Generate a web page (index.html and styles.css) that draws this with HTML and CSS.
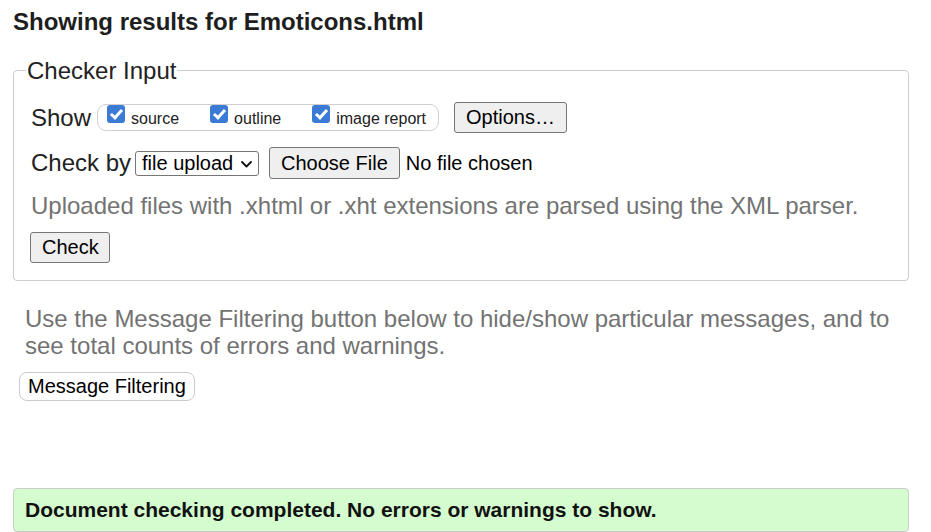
FILE: index.html
```html
<!DOCTYPE html>
<html lang="en">
<head>
<meta charset="utf-8">
<title>Showing results for Emoticons.html - Nu Html Checker</title>
<link rel="stylesheet" href="styles.css">
</head>
<body>
<div class="page">
  <h2 class="title">Showing results for Emoticons.html</h2>
  <form class="checker">
    <fieldset class="checker-input">
      <legend class="legend">Checker Input</legend>
      <div class="row row-show">
        <span class="row-label">Show</span>
        <span class="show-group">
          <label class="show-item"><input type="checkbox" class="cb" checked><span class="cb-text">source</span></label>
          <label class="show-item"><input type="checkbox" class="cb" checked><span class="cb-text">outline</span></label>
          <label class="show-item"><input type="checkbox" class="cb" checked><span class="cb-text">image report</span></label>
        </span>
        <button type="button" class="btn btn-options">Options…</button>
      </div>
      <div class="row row-checkby">
        <span class="row-label">Check by</span>
        <span class="select-wrap">
          <select class="docselect">
            <option>file upload</option>
            <option>address</option>
            <option>text input</option>
          </select>
          <svg class="select-arrow" width="11" height="7" viewBox="0 0 11 7" aria-hidden="true"><path d="M1 1 L5.5 5.5 L10 1" fill="none" stroke="#111" stroke-width="1.8" stroke-linecap="round" stroke-linejoin="round"/></svg>
        </span>
        <input type="file" class="file">
      </div>
      <p class="hint">Uploaded files with .xhtml or .xht extensions are parsed using the XML parser.</p>
      <div class="row row-submit">
        <button type="button" class="btn btn-check">Check</button>
      </div>
    </fieldset>
  </form>
  <p class="filter-note">Use the Message Filtering button below to hide/show particular messages, and to see total counts of errors and warnings.</p>
  <button type="button" class="btn-filter">Message Filtering</button>
  <div class="success">Document checking completed. No errors or warnings to show.</div>
</div>
</body>
</html>
```
FILE: styles.css
```css
html, body {
  margin: 0;
  padding: 0;
  background: #fff;
}
body {
  font-family: "Liberation Sans", Arial, sans-serif;
  font-size: 24px;
  color: #222;
}
.page {
  width: 896px;
  padding: 8px 0 0 13px;
}
.title {
  margin: 0;
  font-size: 24px;
  line-height: 28px;
  font-weight: bold;
  color: #1e1e1e;
}
.checker {
  margin: 21px 0 0 0;
}
.checker-input {
  margin: 0;
  border: 1px solid #cdcdcd;
  border-radius: 4px;
  padding: 18px 17px 17px 17px;
  min-width: 0;
}
.legend {
  padding: 0 1px;
  margin-left: -5px;
  font-size: 24px;
  line-height: 27px;
  color: #222;
}
.row {
  display: flex;
  align-items: center;
}
.row-show {
  height: 31px;
}
.row-checkby {
  height: 32px;
  margin-top: 14px;
}
.row-label {
  line-height: 28px;
  white-space: nowrap;
}
.row-show .row-label {
  margin-right: 6px;
}
.row-checkby .row-label {
  margin-right: 4px;
}
.show-group {
  display: flex;
  align-items: flex-start;
  gap: 31px;
  height: 25px;
  border: 1px solid #cfcfcf;
  border-radius: 9px;
  padding: 0 12px 0 9px;
  margin-right: 15px;
}
.show-item {
  display: flex;
  align-items: flex-start;
  font-size: 16px;
}
.cb {
  appearance: none;
  -webkit-appearance: none;
  position: relative;
  width: 18px;
  height: 18px;
  margin: 0 6px 0 0;
  border-radius: 3px;
  background: #3b7bd6;
}
.cb::after {
  content: "";
  position: absolute;
  left: 6px;
  top: 2px;
  width: 4px;
  height: 9px;
  border: solid #fff;
  border-width: 0 3px 3px 0;
  transform: rotate(42deg);
}
.cb-text {
  padding-top: 5px;
  line-height: 18px;
  color: #222;
}
.btn {
  font-family: "Liberation Sans", Arial, sans-serif;
  font-size: 20px;
  line-height: 23px;
  height: 31px;
  padding: 3px 11px;
  border: 1px solid #767676;
  border-radius: 3px;
  background: #efefef;
  color: #000;
}
.btn-check {
  padding: 3px 10px 3px 11px;
  margin-left: -1px;
}
.select-wrap {
  position: relative;
  display: inline-flex;
  margin: 0 10px 0 0;
}
.docselect {
  appearance: none;
  -webkit-appearance: none;
  font-family: "Liberation Sans", Arial, sans-serif;
  font-size: 20px;
  line-height: 23px;
  width: 124px;
  height: 25px;
  padding: 0 20px 0 6px;
  border: 1px solid #767676;
  border-radius: 3px;
  background: #fff;
  color: #000;
  margin: 0;
}
.select-arrow {
  position: absolute;
  right: 7px;
  top: 10px;
  pointer-events: none;
}
.file {
  font-family: "Liberation Sans", Arial, sans-serif;
  font-size: 20px;
  color: #000;
  margin: 0;
}
.file::file-selector-button {
  font-family: "Liberation Sans", Arial, sans-serif;
  font-size: 20px;
  line-height: 23px;
  height: 32px;
  padding: 3px 11px;
  margin-right: 6px;
  border: 1px solid #767676;
  border-radius: 3px;
  background: #efefef;
  color: #000;
}
.hint {
  margin: 13px 0 0 0;
  line-height: 28px;
  color: #737373;
}
.row-submit {
  margin-top: 12px;
}
.filter-note {
  margin: 24px 12px 0 12px;
  line-height: 27px;
  color: #737373;
}
.btn-filter {
  display: block;
  margin: 13px 0 0 6px;
  font-family: "Liberation Sans", Arial, sans-serif;
  font-size: 20px;
  line-height: 23px;
  height: 29px;
  padding: 2px 8px;
  border: 1px solid #cbcbcb;
  border-radius: 8px;
  background: #fff;
  color: #000;
}
.success {
  margin-top: 87px;
  border: 1px solid #cbcbcb;
  border-radius: 4px;
  background: #d5fcce;
  padding: 9px 11px;
  font-size: 21px;
  line-height: 24px;
  font-weight: bold;
  color: #111;
}
```
